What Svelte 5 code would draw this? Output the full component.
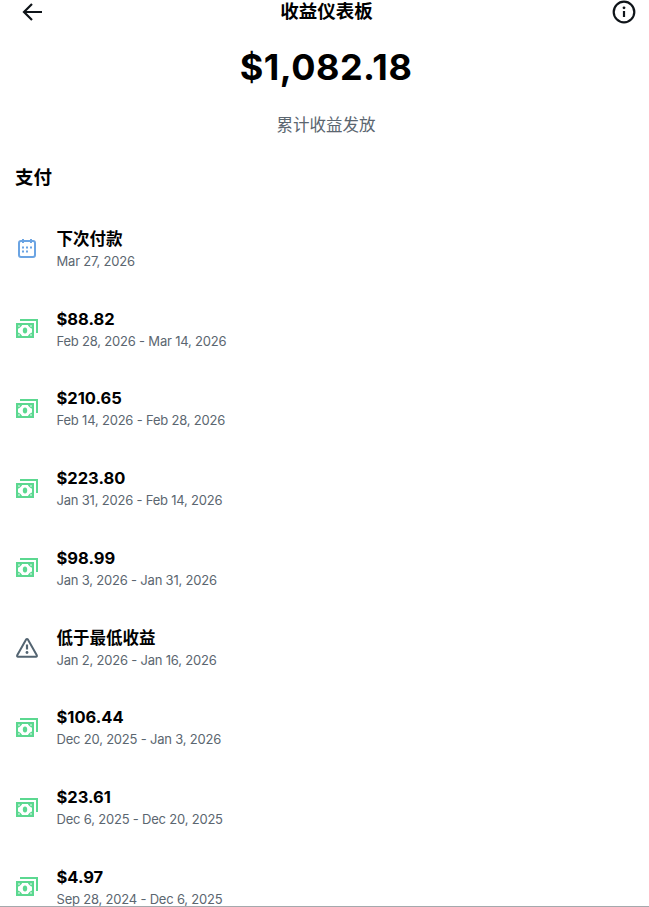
<script lang="ts">
    type Kind = "calendar" | "cash" | "warning";

    interface Payment {
        kind: Kind;
        title: string;
        period: string;
    }

    const total = "$1,082.18";

    const payments: Payment[] = [
        { kind: "calendar", title: "下次付款", period: "Mar 27, 2026" },
        { kind: "cash", title: "$88.82", period: "Feb 28, 2026 - Mar 14, 2026" },
        { kind: "cash", title: "$210.65", period: "Feb 14, 2026 - Feb 28, 2026" },
        { kind: "cash", title: "$223.80", period: "Jan 31, 2026 - Feb 14, 2026" },
        { kind: "cash", title: "$98.99", period: "Jan 3, 2026 - Jan 31, 2026" },
        { kind: "warning", title: "低于最低收益", period: "Jan 2, 2026 - Jan 16, 2026" },
        { kind: "cash", title: "$106.44", period: "Dec 20, 2025 - Jan 3, 2026" },
        { kind: "cash", title: "$23.61", period: "Dec 6, 2025 - Dec 20, 2025" },
        { kind: "cash", title: "$4.97", period: "Sep 28, 2024 - Dec 6, 2025" },
    ];
</script>

<div class="page">
    <header class="topbar">
        <button class="icon-button" aria-label="返回">
            <svg viewBox="0 0 24 24" fill="none" stroke="currentColor" stroke-width="2.2">
                <path d="M21 12H4M11 4 3 12l8 8" />
            </svg>
        </button>
        <h1>收益仪表板</h1>
        <button class="icon-button" aria-label="信息">
            <svg viewBox="0 0 24 24" fill="none" stroke="currentColor" stroke-width="2.2">
                <circle cx="12" cy="12" r="10.3" />
                <path d="M12 11v6" />
                <circle cx="12" cy="7.8" r="1.4" fill="currentColor" stroke="none" />
            </svg>
        </button>
    </header>

    <section class="summary">
        <div class="total">{total}</div>
        <div class="caption">累计收益发放</div>
    </section>

    <h2>支付</h2>

    <ul class="payments">
        {#each payments as payment}
            <li class="payment">
                <span class="payment-icon {payment.kind}">
                    {#if payment.kind === "calendar"}
                        <svg viewBox="0 0 24 24" fill="none" stroke="currentColor">
                            <rect x="4" y="5" width="16" height="16" rx="2" stroke-width="2" />
                            <path d="M8 3v4M16 3v4" stroke-width="2" />
                            <path
                                d="M7 11.5h2M11 11.5h2M15 11.5h2M7 15.5h2M11 15.5h2"
                                stroke-width="2"
                            />
                        </svg>
                    {:else if payment.kind === "cash"}
                        <svg viewBox="0 0 24 24" fill="none" stroke="currentColor">
                            <path d="M5 4h17v13" stroke-width="2" />
                            <rect x="2" y="8" width="16" height="13" stroke-width="2" />
                            <path
                                d="M2 8h5.5Q6.5 11.5 2 13zM18 8h-5.5q1 3.5 5.5 5zM2 21h5.5Q6.5 17.5 2 16zM18 21h-5.5q1-3.5 5.5-5z"
                                fill="currentColor"
                                stroke="none"
                            />
                            <ellipse cx="10" cy="14.500" rx="2.200" ry="3" fill="currentColor" stroke="none" />
                            <g fill="#fff" stroke="none">
                                <circle cx="4" cy="10" r="0.8" />
                                <circle cx="16" cy="10" r="0.8" />
                                <circle cx="4" cy="19" r="0.8" />
                                <circle cx="16" cy="19" r="0.8" />
                            </g>
                        </svg>
                    {:else}
                        <svg
                            viewBox="0 0 24 24"
                            fill="none"
                            stroke="currentColor"
                            stroke-width="2"
                            stroke-linejoin="round"
                        >
                            <path d="M11.1 3.5 2.2 19.3Q1.700 20.700 3 20.700H21Q22.300 20.700 21.800 19.300L12.900 3.500Q12 2.500 11.100 3.500z" />
                            <path d="M12 8.500v5" stroke-width="2.2" />
                            <circle cx="12" cy="16.500" r="1.400" fill="currentColor" stroke="none" />
                        </svg>
                    {/if}
                </span>
                <div class="payment-text">
                    <div class="payment-title">{payment.title}</div>
                    <div class="payment-period">{payment.period}</div>
                </div>
            </li>
        {/each}
    </ul>
</div>

<style>
    :global(body) {
        margin: 0;
        background: #fff;
    }

    .page {
        box-sizing: border-box;
        height: 907px;
        overflow: hidden;
        border-bottom: 1px solid #a4a9ad;
        color: #000;
        font-family: Inter, "Noto Sans CJK SC", sans-serif;
    }

    .topbar {
        display: grid;
        grid-template-columns: 24px 1fr 24px;
        align-items: center;
        height: 24px;
        padding: 0 13px 0 21px;
    }

    .icon-button {
        display: flex;
        padding: 0;
        border: none;
        background: none;
        color: #0f1419;
    }

    .icon-button svg {
        width: 24px;
        height: 24px;
    }

    h1,
    h2 {
        margin: 0;
        font-size: 18.5px;
        font-weight: 700;
        line-height: 24px;
    }

    h1 {
        padding: 0 4px 2px 0;
        line-height: 22px;
        text-align: center;
    }

    .summary {
        padding-left: 3px;
        text-align: center;
    }

    .total {
        padding-top: 19px;
        font-size: 36px;
        font-weight: 700;
        letter-spacing: 0.5px;
        line-height: 48px;
    }

    .caption {
        padding-top: 23px;
        color: #5b6670;
        font-size: 16.5px;
        line-height: 22px;
    }

    h2 {
        padding: 29px 15px 0;
    }

    .payments {
        margin: 21px 0 0;
        padding: 0;
        list-style: none;
    }

    .payment {
        display: flex;
        align-items: center;
        gap: 17.5px;
        box-sizing: border-box;
        height: 79.75px;
        padding: 0 15px;
    }

    .payment-icon {
        display: flex;
        flex-shrink: 0;
        padding-bottom: 3px;
    }

    .payment-icon svg {
        width: 24px;
        height: 24px;
    }

    .calendar {
        color: #6ba4e3;
    }

    .cash {
        color: #5bd890;
    }

    .warning {
        padding-bottom: 2px;
        color: #536471;
    }

    .payment-title {
        font-size: 16.5px;
        font-weight: 700;
        line-height: 22px;
    }

    .payment-period {
        color: #5b6670;
        font-size: 13px;
        letter-spacing: -0.2px;
        line-height: 22px;
    }
</style>
